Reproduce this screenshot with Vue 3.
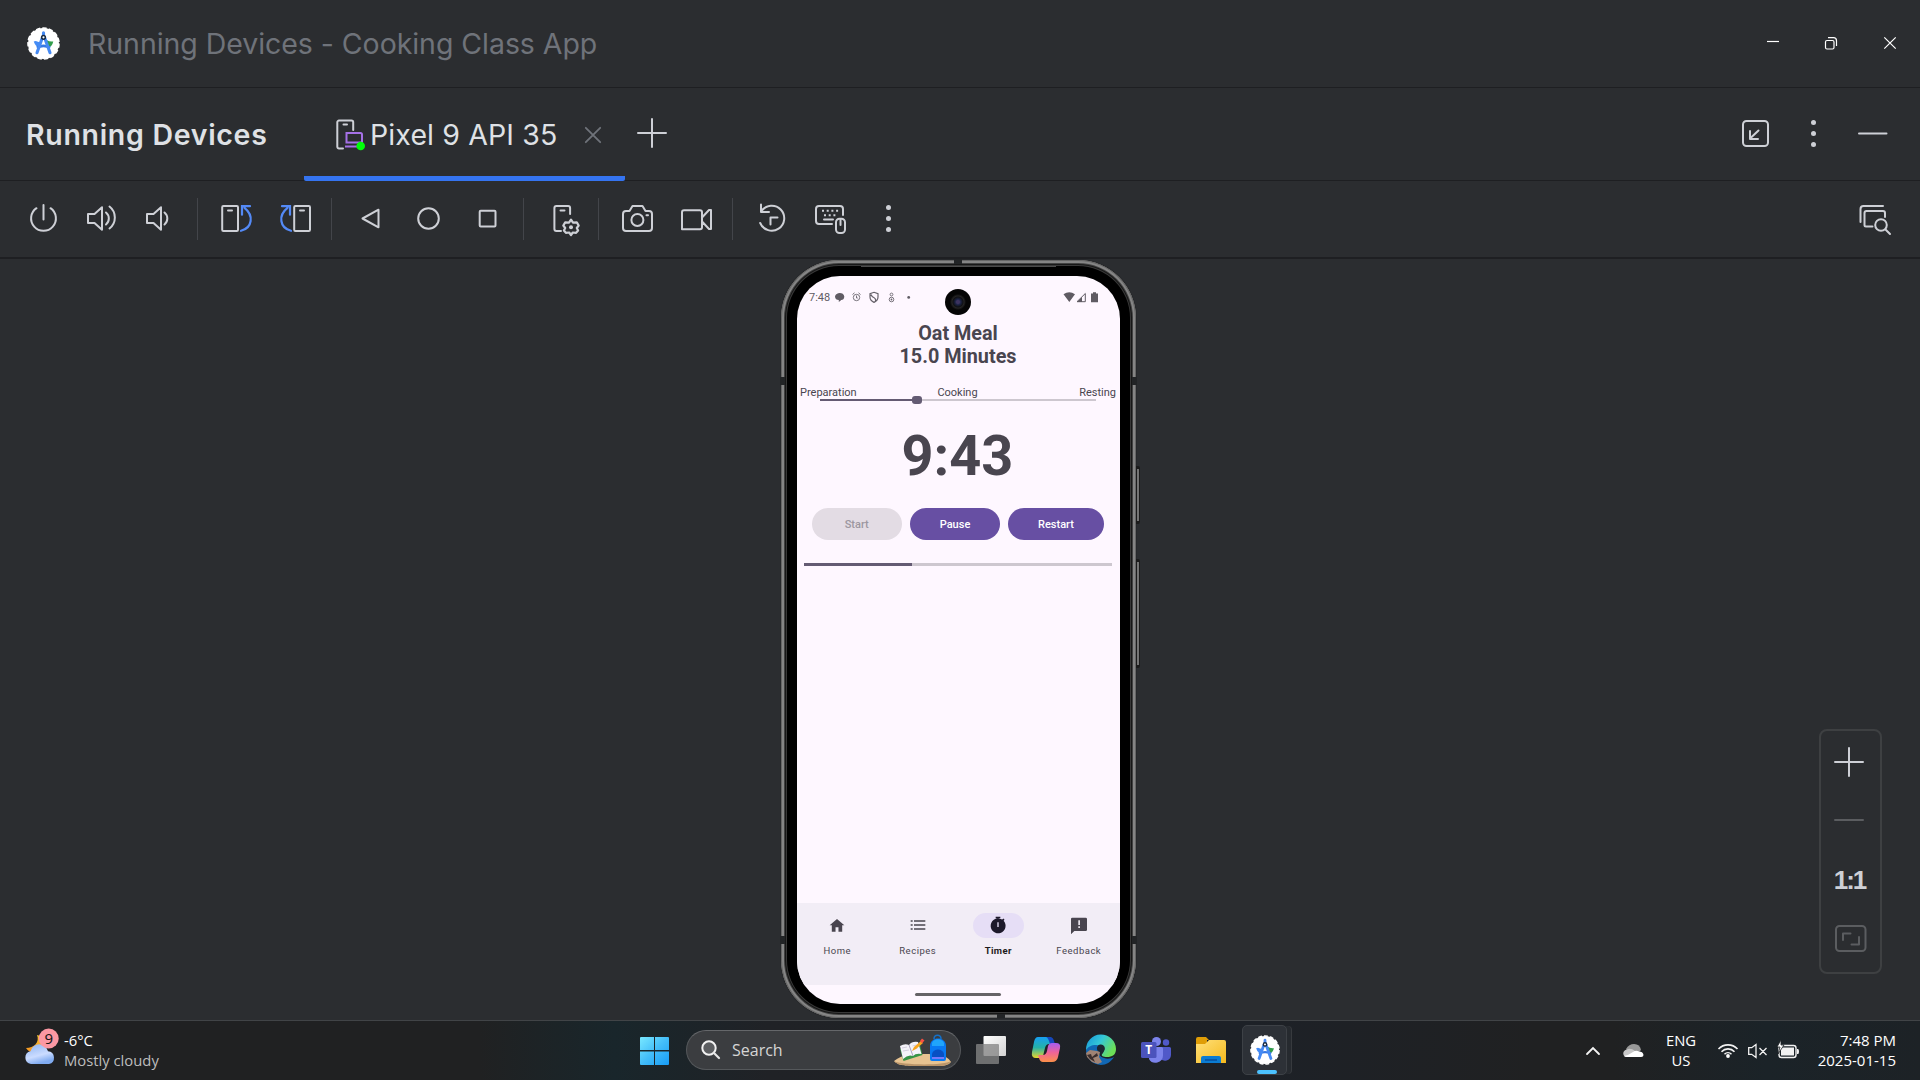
<script setup>
const steps = ['Preparation', 'Cooking', 'Resting']
const stepProgress = 35.2
const timerProgress = 35
const buttons = [
  { label: 'Start', kind: 'off' },
  { label: 'Pause', kind: 'mid' },
  { label: 'Restart', kind: 'wide' },
]
const nav = [
  { label: 'Home', icon: 'M12 3 1 12.4h3.2V22h5.6v-6.6h4.4V22h5.6v-9.6H23z' },
  { label: 'Recipes', icon: 'M1 5h3v2H1zM6 5h17v2H6zM1 11h3v2H1zM6 11h17v2H6zM1 17h3v2H1zM6 17h17v2H6z' },
  { label: 'Timer', active: true, icon: 'M8.5-.5h7v2.4h-7zM20.4 5.6l1.4-1.6-1.7-1.6-1.7 1.5A11.2 11.2 0 1 0 20.4 5.600zM11 8h2v7h-2z' },
  { label: 'Feedback', icon: 'M2 1h20a2 2 0 0 1 2 2v16a2 2 0 0 1-2 2H5l-5 5V3a2 2 0 0 1 2-2zM11 5h2.400v7H11zM11 14h2.400v2.400H11z' },
]
</script>

<template>
  <div class="desktop">
    <header class="titlebar">
      <svg class="logo" viewBox="0 0 32 32"><use href="#studio" /></svg>
      <span class="title">Running Devices - Cooking Class App</span>
      <svg class="winctl" viewBox="1767 35 130 16">
        <path d="M1767 41.500h12" />
        <rect x="1825.500" y="40.500" width="8.500" height="8.500" rx="1.500" />
        <path d="M1828 37.700h5.500a3 3 0 0 1 3 3V46M1884.300 37.300l11.400 11.400M1895.700 37.300l-11.400 11.400" />
      </svg>
    </header>

    <div class="tabs">
      <span class="heading">Running Devices</span>
      <div class="tab">
        <svg class="tabicon" viewBox="335 118 32 36">
          <path class="ln" d="M343 149.500h-4a1.700 1.700 0 0 1-1.700-1.700v-24.500a1.700 1.700 0 0 1 1.700-1.700h12.500a1.700 1.700 0 0 1 1.700 1.700V131M343.500 125.500h3.500" />
          <path d="M346.500 134h14a1.500 1.500 0 0 1 1.500 1.500v8H346.500zM345 147.500h13" fill="none" stroke="#a571e6" stroke-width="2" />
          <circle cx="360.700" cy="147" r="4.300" fill="#00ff09" />
        </svg>
        <span class="tabname">Pixel 9 API 35</span>
        <svg class="tabclose" viewBox="0 0 16 16"><path d="M.8.800l14.400 14.400M15.200.800.8 15.200" /></svg>
      </div>
      <svg class="plus" viewBox="0 0 30 30"><path class="ln" d="M15 1v28M1 15h28" /></svg>
      <svg class="tabtools" viewBox="1740 115 150 36">
        <rect class="ln" x="1743" y="121" width="25" height="25" rx="3.500" />
        <path class="ln" d="M1758.500 130.500l-8.500 8M1750 131v8h8" />
        <g class="dots"><circle cx="1813.500" cy="122.500" r="2.500" /><circle cx="1813.500" cy="133.500" r="2.500" /><circle cx="1813.500" cy="144.500" r="2.500" /></g>
        <path class="ln" d="M1859 133.500h27.500" />
      </svg>
    </div>

    <div class="toolbar">
      <div class="group">
        <svg viewBox="28 202 32 34"><path class="ln" d="M43.500 205v14.500M36.500 208.200a12.400 12.400 0 1 0 14 0" /></svg>
        <svg viewBox="86 202 32 34"><path class="ln" d="M88 214h6.500l7.500-6.800v22.600L94.500 223H88zM106 212.500a7.800 7.800 0 0 1 0 12M109.500 206.500a14 14 0 0 1 0 22" /></svg>
        <svg viewBox="144 202 32 34"><path class="ln" d="M147 214h6.500l7.500-6.800v22.600L153.500 223H147zM164.500 212.500a7.800 7.800 0 0 1 0 12" /></svg>
      </div>
      <i></i>
      <div class="group">
        <svg viewBox="221 202 32 34">
          <rect class="ln" x="222.200" y="206" width="15.800" height="25" rx="1.200" /><path class="ln" d="M228 210.500h4" />
          <path class="blue" d="M241 230.800c11.500-3 13-15.500 3.500-23M250 206.200h-8v8.500" />
        </svg>
        <svg viewBox="279 202 32 34">
          <rect class="ln" x="294.200" y="206" width="15.800" height="25" rx="1.200" /><path class="ln" d="M300 210.500h4" />
          <path class="blue" d="M291 230.800c-11.500-3-13-15.500-3.500-23M282 206.200h8v8.500" />
        </svg>
      </div>
      <i></i>
      <div class="group">
        <svg viewBox="355 202 32 34"><path class="ln" d="M378.500 209.700v17.600L362.500 218.500z" /></svg>
        <svg viewBox="413 202 32 34"><circle class="ln" cx="428.500" cy="218.500" r="10.300" /></svg>
        <svg viewBox="471 202 32 34"><rect class="ln" x="479.700" y="210.700" width="15.800" height="15.800" rx="1" /></svg>
      </div>
      <i></i>
      <div class="group">
        <svg viewBox="551 202 32 34">
          <path class="ln" d="M561 231h-4.600a2 2 0 0 1-2-2v-21a2 2 0 0 1 2-2h11.700a2 2 0 0 1 2 2v6M560.500 210.500h4" />
          <path class="ln thick" d="M571 219.700l2 3 3.800-.3 1.900 3.100-1.900 2.500 1.300 2.500-2 2.300-3.300-.3-1.800 2.500-1.800-2.500-3.300.3-2-2.300 1.300-2.500-1.900-2.500 1.900-3.100 3.800.3z" />
          <circle cx="571" cy="227.200" r="2" fill="#ced0d6" />
        </svg>
      </div>
      <i></i>
      <div class="group">
        <svg viewBox="622 202 32 34">
          <path class="ln" d="M626 211h3.500l3-5h10l3 5h3.500a3 3 0 0 1 3 3v14a3 3 0 0 1-3 3h-23a3 3 0 0 1-3-3v-14a3 3 0 0 1 3-3z" /><circle class="ln" cx="637.400" cy="220" r="6" /><path class="ln" d="M646.500 215.300h1.500" />
        </svg>
        <svg viewBox="680 202 32 34"><path class="ln" d="M684 210.300h16a2 2 0 0 1 2 2v15a2 2 0 0 1-2 2h-18v-17a2 2 0 0 1 2-2zM702.500 217l6.500-7h2v19h-2l-6.500-7" /></svg>
      </div>
      <i></i>
      <div class="group">
        <svg viewBox="756 202 32 34"><path class="ln" d="M761 204.500v7.500h8M761.500 211a12.500 12.500 0 1 1-1.300 12M770.500 224.500v-7h7" /></svg>
        <svg viewBox="814 202 32 34">
          <path class="ln" d="M832 224h-13a3 3 0 0 1-3-3v-12a3 3 0 0 1 3-3h21a3 3 0 0 1 3 3v6M824 219.500h9" />
          <path d="M822 210.800h17M824 215.200h13" fill="none" stroke="#ced0d6" stroke-width="2" stroke-dasharray="2 2.700" />
          <rect class="ln" x="836" y="218.800" width="9" height="14.200" rx="3.500" /><path class="ln" d="M840.500 219v6" />
        </svg>
        <svg class="dots" viewBox="872 202 32 34"><circle cx="888.500" cy="207.500" r="2.500" /><circle cx="888.500" cy="218.500" r="2.500" /><circle cx="888.500" cy="229.500" r="2.500" /></svg>
      </div>
      <svg class="inspect" viewBox="1860 202 34 34">
        <path class="ln" d="M1861.500 222v-13a3 3 0 0 1 3-3h19.500M1873.500 226.500h-6.500a1.500 1.500 0 0 1-1.500-1.500v-12a2 2 0 0 1 2-2h16.500a2 2 0 0 1 2 2v4M1886.500 229.500l4.500 4.500" />
        <circle class="ln" cx="1882" cy="225" r="5.800" />
      </svg>
    </div>

    <main class="stage">
      <div class="phone">
        <b class="seam s1"></b><b class="seam s2"></b><b class="seam s3"></b><b class="seam s4"></b><b class="seam s5"></b><b class="seam s6"></b>
        <b class="key k1"></b><b class="key k2"></b><b class="speaker"></b>
        <div class="screen">
          <div class="status">
            <span>7:48</span>
            <svg class="notes" viewBox="834 291 78 13">
              <g fill="none" stroke="#77737b" stroke-width="1">
                <circle cx="856.500" cy="297.500" r="3.200" /><path d="M852.500 294.500l2-1.700M860.500 294.500l-2-1.700M856.500 295.500v2.500h1.300" />
                <path d="M874 292.300l4 1.300v3.500c0 2.500-1.600 4.200-4 5.300-2.400-1.100-4-2.800-4-5.300v-3.500zM871 294.500q1 3 3.500 3.500 1.500 1 1 3" stroke="#66626a" stroke-width="1.200" />
                <circle cx="891.500" cy="299.500" r="2.300" /><circle cx="891.500" cy="294.500" r="1.400" />
              </g>
              <path d="M835 296.500c.5-4.500 8.800-5 9.300 0 0 2.300-1.500 3.600-3 3.600l-2.500 2v-2c-2 0-3.800-1.300-3.800-3.600z" fill="#605c64" />
              <circle cx="891.500" cy="299.500" r=".9" fill="#66626a" /><circle cx="908.700" cy="297.400" r="1.400" fill="#605c64" />
            </svg>
            <svg class="signal" viewBox="1063 291 36 13">
              <path d="M1063.500 294.300q5.800-4 11.500 0l-5.700 7.700zM1091 293.500h2v-1.300h3v1.300h2v8.700h-7z" fill="#5f5b63" />
              <path d="M1085.300 293.500v8.200h-8.300z" fill="none" stroke="#5f5b63" /><path d="M1082 297v5h-5z" fill="#5f5b63" />
            </svg>
            <b class="lens"></b>
          </div>
          <h1>Oat Meal<br />15.0 Minutes</h1>
          <div class="steps"><span v-for="s in steps" :key="s">{{ s }}</span></div>
          <div class="slider"><div class="done" :style="{ width: stepProgress + '%' }"></div></div>
          <div class="clock">9:43</div>
          <div class="actions"><button v-for="b in buttons" :key="b.label" :class="b.kind">{{ b.label }}</button></div>
          <div class="progress"><div class="done" :style="{ width: timerProgress + '%' }"></div></div>
          <nav class="nav">
            <div v-for="n in nav" :key="n.label" class="item" :class="{ active: n.active }">
              <div class="pill"><svg viewBox="0 0 24 24"><path :d="n.icon" fill="currentColor" fill-rule="evenodd" /></svg></div>
              <span>{{ n.label }}</span>
            </div>
          </nav>
          <div class="gesture"></div>
        </div>
      </div>

      <div class="zoom">
        <svg viewBox="0 0 30 30"><path class="ln" d="M15 1v28M1 15h28" /></svg>
        <svg class="dim" viewBox="0 0 30 30"><path class="ln" d="M1 15h28" /></svg>
        <span>1:1</span>
        <svg class="dim fit" viewBox="0 0 32 27"><rect class="ln" x="1" y="1" width="29.500" height="25" rx="3.500" /><path class="ln" d="M8 15V8.500h7.500M24 12v7.500h-7.500" /></svg>
      </div>
    </main>

    <footer class="taskbar">
      <svg class="weather" viewBox="24 1024 36 42">
        <path d="M37 1034c3 7-3 13-11 13 3 5 9 6 14 3l4-14z" fill="url(#moon)" />
        <path d="M31 1063a6.500 6.500 0 0 1-.5-12.800 9 9 0 0 1 17.500 0 6.500 6.500 0 0 1 1 12.800z" fill="url(#cloud)" />
        <circle cx="48.700" cy="1037.500" r="10" fill="#fb98a3" />
        <text x="48.700" y="1043" text-anchor="middle" font-size="15" fill="#171717">9</text>
      </svg>
      <div class="forecast"><span>-6°C</span><em>Mostly cloudy</em></div>

      <svg class="start" viewBox="0 0 29 29"><path d="M0 2a1 1 0 0 1 1-1h13v13H0zM15 1h13a1 1 0 0 1 1 1v12H15zM0 15.500h14V29H1a1 1 0 0 1-1-1zM15 15.500h14V28a1 1 0 0 1-1 1H15z" fill="url(#win)" /></svg>
      <div class="search">
        <svg class="lensicon" viewBox="0 0 20 20"><circle cx="8" cy="8" r="6.700" fill="#5c5e61" stroke="#f2f2f2" stroke-width="2" /><path d="M13 13l5 5" stroke="#e5e5e5" stroke-width="2.200" stroke-linecap="round" /></svg>
        <span>Search</span>
        <svg class="promo" viewBox="895 1034 60 34">
          <path d="M896 1062c9-7 17-7 29-7 15 0 23 0 28 8-4 5-12 4-28 4-18 0-24 0-29-5z" fill="#e7c391" /><path d="M896 1062c6 4 50 5 57 0-3 6-12 5-28 5-18 0-24 0-29-5z" fill="#bb9569" />
          <path d="M902 1050l20-4 2.500 10-19 6z" fill="#369447" /><path d="M902 1047q5-3 9-1 3-4 9-3l3.500 12q-6-1-8.500 2-5-2-10 3z" fill="#f4f3f9" />
          <path d="M911 1046l4 11" stroke="#a9a2bb" fill="none" /><path d="M904 1049l5-1M905 1052l6-1M914.500 1047l4-1M915.500 1050l4-1" stroke="#c4bfd2" stroke-width=".7" fill="none" />
          <path d="M914 1052l2-4 7-6 2 2-7 6z" fill="#f8a51e" /><path d="M922 1042l2-2.500 2.500 2-2.500 2.700z" fill="#fa5142" />
          <path d="M936 1040c0-5 7-5 7 0" fill="none" stroke="#1670c5" stroke-width="1.500" /><path d="M932 1047c0-10 16-10 16 0v13q0 2-2 2h-12q-2 0-2-2z" fill="#0979f2" /><path d="M934 1044c2-5 10-5 12 0v3h-12z" fill="#20a5fb" /><path d="M934 1055c1-6 11-6 12 0v5h-12z" fill="#0850c4" /><path d="M934 1058h12v2h-12z" fill="#7779fa" />
        </svg>
      </div>
      <svg class="app" viewBox="975 1034 32 32"><rect x="983.500" y="1036" width="22.500" height="20" rx="1" fill="url(#white)" /><rect x="976" y="1044" width="23" height="20" rx="1" fill="#858585" fill-opacity=".78" /></svg>
      <svg class="app" viewBox="1030 1034 32 32">
        <path d="M1038 1037h11q3 0 4 4l1 3h-5q-3 0-4 4l-2 8q-1 2-4 2h-3q-5 0-4-6l2-10q1-5 4-5z" fill="url(#copA)" />
        <path d="M1046 1037h4q3 0 4 4l1 3h-5q-2-7-4-7z" fill="#1647bd" />
        <path d="M1052 1062h-9q-3 0-4-4l-1-3h5q3 0 4-4l1-5q1-3 4-3h4q5 0 4 5l-2 9q-1 5-6 5z" fill="url(#copB)" />
      </svg>
      <svg class="app" viewBox="1085 1034 32 32">
        <path d="M1086 1050c2-7 12-8 16-3 3 3-1 7-3 5-1 5 8 9 15 5-3 5-8 8-13 8a15 15 0 0 1-15-15z" fill="#1167b4" />
        <path d="M1086 1050a15 15 0 0 1 30-1c0 6-4 8-9 8-4 0-6-1-5-3 4-3 1-9-6-9-5 0-8 2-10 5z" fill="url(#edgeA)" />
        <path d="M1099 1052a4 4 0 1 1 5-1l-2 3q-2 2-3-2z" fill="#1c2632" />
        <path d="M1086 1053l4-3 7 1 3 1-1 5 3 5-4 2-6-2-5-5z" fill="#a08374" /><path d="M1087 1055l4-1 1 3 5-4 1 3-5 2 2 4-5-3z" fill="#392d2d" />
      </svg>
      <svg class="app" viewBox="1140 1034 32 32">
        <circle cx="1156.500" cy="1041.500" r="4.500" fill="#7b83eb" /><circle cx="1166" cy="1042.500" r="3.200" fill="#5059c9" />
        <path d="M1160 1047h9.500q1.500 0 1.500 1.500v6.500a6 6 0 0 1-11 3z" fill="#5059c9" /><path d="M1150 1047h11.500q1.500 0 1.500 1.500v7a7.500 7.500 0 0 1-14 3.500z" fill="#7b83eb" />
        <rect x="1141" y="1042" width="15.500" height="16" rx="1.500" fill="#4b53bc" /><text x="1148.700" y="1054.300" text-anchor="middle" font-size="12" font-weight="700" fill="#fff">T</text>
      </svg>
      <svg class="app" viewBox="1195 1034 32 32">
        <path d="M1196 1039q0-2 2-2h8l3 3h-2v6h-11z" fill="#df9d07" /><path d="M1196 1044h9l4-4h15q2 0 2 2v21h-30z" fill="url(#folder)" />
        <path d="M1201 1063v-5q0-2 2-2h16q2 0 2 2v5z" fill="#0b7cd2" /><path d="M1205 1060h12" stroke="#074e9d" stroke-width="1.500" />
      </svg>
      <div class="running"><svg viewBox="0 0 32 32"><use href="#studio" /></svg></div>

      <svg class="tray" viewBox="1584 1038 62 22">
        <path d="M1587 1053l6-6 6 6" fill="none" stroke="#f4f4f4" stroke-width="1.800" stroke-linecap="round" />
        <path d="M1626 1048q3-5 8-5 6 0 7 6l-3 3-10-1z" fill="#989898" /><path d="M1627 1056c-5 0-5-7 0-7.500 3-1.500 5-.5 8 1.500l8 5z" fill="#c8c8c8" /><path d="M1624 1055q5-1 9-4 3-2 6-.5c5 0 6 5.500 2 5.500h-14q-2 0-3-1z" fill="#fff" />
      </svg>
      <div class="lang"><span>ENG</span><span>US</span></div>
      <svg class="tray2" viewBox="1717 1038 82 22">
        <g fill="none" stroke="#f2f2f2" stroke-width="1.600"><path d="M1718.500 1048a13 13 0 0 1 19 0M1721.500 1050.700a9 9 0 0 1 13 0M1724.500 1053.200a5 5 0 0 1 7 0" />
          <path d="M1748.700 1046.700h3l4.300-3.200v13l-4.300-3.200h-3zM1759.500 1047l7 7M1766.500 1047l-7 7" stroke-width="1.300" />
          <rect x="1779" y="1044.500" width="17" height="12" rx="2.500" stroke-width="1.400" /></g>
        <circle cx="1728" cy="1055" r="1.900" fill="#fff" /><path d="M1781 1046.500h13v8h-13zM1797 1048h1q1 0 1 2.500t-1 2.500h-1z" fill="#f2f2f2" />
        <path d="M1781 1039l-4 7h3l-2 7 6-9h-3z" fill="#fff" stroke="#1d2125" stroke-width=".8" />
      </svg>
      <div class="time"><span>7:48 PM</span><span>2025-01-15</span></div>
    </footer>

    <svg class="defs" width="0" height="0">
      <defs>
        <symbol id="studio" viewBox="0 0 32 32">
          <circle cx="16" cy="16" r="15" fill="#fff" /><circle cx="16" cy="16" r="15" fill="none" stroke="#fff" stroke-width="1.600" stroke-dasharray="4.200 2.080" />
          <path d="M19 12.500q3 2 6.500 1.500-1 5-5.500 6z" fill="#329d4c" /><path d="M6.500 14q2 5.500 5.500 5.500l2-4-5.500-2z" fill="#438bf5" /><path d="M9.500 20q6.500-3.500 13 0" fill="none" stroke="#3578e5" stroke-width="2.600" />
          <path d="M16 5.500v3M14.700 11 9.700 25M17.300 11l5 14" fill="none" stroke="#468af3" stroke-width="3" stroke-linecap="round" /><circle cx="16" cy="10" r="1.800" fill="#fff" stroke="#172b45" stroke-width="1.500" />
        </symbol>
        <linearGradient id="win" x2="1" y2="1"><stop stop-color="#79e8ff" /><stop offset=".5" stop-color="#43bdf9" /><stop offset="1" stop-color="#179cf5" /></linearGradient>
        <linearGradient id="moon" x2="0" y2="1"><stop stop-color="#f9c632" /><stop offset="1" stop-color="#f49121" /></linearGradient>
        <linearGradient id="cloud" x2=".4" y2="1"><stop stop-color="#8cb3f1" /><stop offset=".65" stop-color="#cbdcff" /><stop offset="1" stop-color="#80abf0" /></linearGradient>
        <linearGradient id="white" x2="1" y2="1"><stop stop-color="#fff" /><stop offset="1" stop-color="#d2d2d2" /></linearGradient>
        <linearGradient id="copA" x2="0" y2="1"><stop stop-color="#179ff2" /><stop offset=".5" stop-color="#25b2a8" /><stop offset="1" stop-color="#e9d52b" /></linearGradient>
        <linearGradient id="copB" x2="0" y2="1"><stop stop-color="#a75cf0" /><stop offset=".5" stop-color="#ef6398" /><stop offset="1" stop-color="#fb9049" /></linearGradient>
        <linearGradient id="edgeA" x2="1" y2=".5"><stop stop-color="#1594d9" /><stop offset=".5" stop-color="#34c7d8" /><stop offset="1" stop-color="#6cdf57" /></linearGradient>
        <linearGradient id="folder" x2="1" y2="1"><stop stop-color="#ffe07a" /><stop offset="1" stop-color="#f5b91c" /></linearGradient>
      </defs>
    </svg>
  </div>
</template>

<style>
html, body { margin: 0; background: #2b2d30; overflow: hidden; }
</style>

<style scoped>
* { box-sizing: border-box; }
.desktop { width: 1920px; height: 1080px; display: flex; flex-direction: column; background: #2b2d30; font-family: Inter, sans-serif; color: #dfe1e5; white-space: nowrap; }
svg { display: block; flex: none; overflow: visible; }
.defs { position: absolute; }
.ln { fill: none; stroke: #ced0d6; stroke-width: 2; stroke-linecap: round; stroke-linejoin: round; }
.thick { stroke-width: 2.2; }
.blue { fill: none; stroke: #548af7; stroke-width: 2.2; stroke-linecap: round; }
.dots { fill: #ced0d6; }

.titlebar { height: 88px; display: flex; align-items: center; border-bottom: 1px solid #1e1f22; padding: 0 23px 0 27px; }
.logo { width: 33px; height: 33px; }
.title { margin-left: 28px; font-size: 28.5px; color: #6f737a; letter-spacing: -.05px; }
.winctl { width: 130px; height: 16px; margin: 0 0 2px auto; fill: none; stroke: #fff; stroke-width: 1.2; }

.tabs { height: 93px; display: flex; align-items: center; border-bottom: 1px solid #1e1f22; padding-left: 26px; }
.heading { width: 278px; font-size: 28.5px; font-weight: 600; letter-spacing: .7px; }
.tab { width: 321px; height: 93px; display: flex; align-items: center; padding-left: 31px; border-bottom: 5px solid #3574f0; border-radius: 2px; padding-top: 5px; position: relative; z-index: 1; }
.tabicon { width: 32px; height: 36px; margin-top: 2px; }
.tabname { width: 215px; margin-left: 3px; font-size: 28.5px; letter-spacing: .12px; }
.tabclose { width: 16px; height: 16px; margin-top: 2px; fill: none; stroke: #6f737a; stroke-width: 1.8; stroke-linecap: round; }
.plus { width: 30px; height: 30px; margin: 0 0 3px 12px; }
.tabtools { width: 150px; height: 36px; margin: 0 30px 2px auto; }

.toolbar { height: 78px; display: flex; align-items: center; border-bottom: 2px solid #1e1f22; padding: 0 27px 0 28px; }
.group { display: flex; gap: 26px; }
.group svg { width: 32px; height: 34px; }
.toolbar i { width: 1px; height: 42px; background: #43454a; margin: 0 23px 0 20px; }
.toolbar i:nth-of-type(1) { margin-left: 21px; }
.toolbar i:nth-of-type(3) { margin-right: 27px; }
.toolbar i:nth-of-type(4) { margin-left: 15px; }
.inspect { width: 34px; height: 34px; margin-left: auto; }

.stage { height: 761px; display: flex; justify-content: center; padding: 1px 3px 0 0; position: relative; }
.phone { position: relative; width: 355px; height: 758px; padding: 16px; border-radius: 58px; background: #000; box-shadow: inset 0 0 0 1px #666, inset 0 0 0 3px #858585, inset 0 0 0 4px #414141, inset 0 0 0 5px #171717, inset 0 0 0 6px #383838, 0 0 1px #000; }
.seam, .key, .speaker, .lens { position: absolute; }
.seam { background: #222426; width: 5px; height: 8px; }
.s1 { left: 173px; top: -1px; width: 8px; height: 5px; }
.s2 { left: -1px; top: 117px; }
.s3 { right: -1px; top: 117px; }
.s4 { left: -1px; top: 676px; }
.s5 { right: -1px; top: 676px; }
.s6 { left: 216px; bottom: 0; width: 8px; height: 4px; }
.key { left: 355px; width: 4px; background: #757575; border: solid #1b1b1b; border-width: 3px 1px 3px 1px; border-radius: 0 2px 2px 0; }
.k1 { top: 206px; height: 58px; }
.k2 { top: 299px; height: 109px; }
.speaker { left: 80px; top: 6px; width: 195px; height: 1px; background: #4c4c4c; }
.screen { width: 323px; height: 728px; border-radius: 43px; overflow: hidden; background: #fef7ff; color: #49454f; font-family: Roboto, sans-serif; display: flex; flex-direction: column; }
.status { position: relative; height: 36px; display: flex; align-items: flex-start; padding: 14px 0 0 12px; font-size: 11px; line-height: 15px; color: #5f5b63; }
.status span { width: 25px; }
.notes { width: 78px; height: 13px; margin-top: 1px; }
.signal { width: 36px; height: 13px; margin: 1px 21px 0 auto; }
.lens { left: 147.500px; top: 13px; width: 26px; height: 26px; border-radius: 50%; background: radial-gradient(circle, #3c3360 0 1.500px, #182040 3px, #101012 5px, #242424 6px, #050505 8px); }
h1 { margin: 10px 1px 0 0; font-size: 19.800px; line-height: 23px; font-weight: 700; text-align: center; height: 46px; }
.steps { display: grid; grid-template-columns: 1fr auto 1fr; margin: 18px 5px 0 3px; height: 13px; font-size: 11px; line-height: 13px; }
.steps span:last-child { text-align: right; margin-right: -1px; }
.slider { position: relative; margin: 0 24px 0 23px; height: 2px; background: #cdc7cf; }
.done { height: 100%; background: #645b73; position: relative; }
.slider .done::after { content: ''; position: absolute; right: -5px; top: -3px; width: 10px; height: 8px; border-radius: 3px; background: #645b73; }
.clock { height: 66px; margin: 22px 2px 0 0; text-align: center; font-size: 55.800px; line-height: 66px; font-weight: 700; }
.actions { display: flex; margin: 19px 16px 0 14.500px; justify-content: space-between; }
button { height: 32px; width: 90.500px; border: 0; border-radius: 16px; background: #674fa3; color: #fff; font: 500 11px Roboto, sans-serif; padding: 0; }
button.off { background: #e3dce4; color: #9c97a0; }
button.wide { width: 96px; }
.progress { height: 3px; margin: 23px 8px 0 7px; background: #cdc7cf; }
.nav { height: 82px; margin-top: auto; display: flex; background: #f2edf6; padding-right: 1px; }
.item { flex: 1; display: flex; flex-direction: column; align-items: center; padding-top: 10px; font-size: 9.500px; letter-spacing: .5px; font-weight: 400; }
.item span { margin-top: 5.500px; line-height: 14px; }
.pill { width: 51px; height: 25px; border-radius: 13px; display: grid; place-items: center; padding-bottom: 2px; }
.pill svg { width: 16px; height: 16px; overflow: visible; }
.active .pill { background: #e6def6; color: #1d192b; }
.active span { color: #1d1b20; font-weight: 700; letter-spacing: .4px; }
.gesture { width: 86px; height: 3px; margin: 8px 0 8px 118px; border-radius: 2px; background: #666367; }

.zoom { position: absolute; left: 1819px; top: 470px; width: 63px; height: 245px; border: 2px solid #3e4042; border-radius: 8px; display: flex; flex-direction: column; align-items: center; padding-top: 16px; }
.zoom svg { width: 30px; height: 30px; margin-right: 3px; }
.zoom .dim { margin-top: 28px; }
.zoom .dim .ln { stroke: #5b5d60; }
.zoom span { margin: 28px 2px 0 0; height: 34px; font: 700 26px/34px "Liberation Sans", sans-serif; color: #ced0d6; letter-spacing: -2px; }
.zoom .fit { width: 32px; height: 27px; margin: 28px 0 0; }

.taskbar { height: 60px; display: flex; align-items: center; padding-bottom: 1px; border-top: 1px solid #414447; background: linear-gradient(90deg, #202122 0, #202122 25%, #19262b 32%, #202226 40%, #1d2127 65%, #202122 80%, #202122 84%, #1b2328 92%, #1d2226 100%); font-family: "Noto Sans", "Open Sans", sans-serif; font-size: 15px; line-height: 20px; color: #fff; position: relative; }
.weather { width: 36px; height: 42px; margin: -9px 0 0 24px; }
.forecast { width: 576px; margin: -1px 0 0 4px; display: flex; flex-direction: column; font-family: "Open Sans", sans-serif; font-size: 14.800px; }
.forecast em { font-style: normal; color: #bdbdbd; }
.start { width: 29px; height: 29px; }
.search { width: 275px; height: 40px; margin: 0 14px 0 17px; display: flex; align-items: center; padding: 0 7px 0 14px; border-radius: 20px; border: 1px solid #55585b; border-top-color: #65676a; background: #3b3d40; }
.search .lensicon { width: 20px; height: 20px; }
.search span { margin-left: 11px; font-size: 16px; color: #d5d5d5; font-family: "Open Sans", sans-serif; }
.promo { width: 60px; height: 34px; margin-left: auto; }
.app { width: 32px; height: 32px; margin-right: 23px; }
.running { width: 45px; height: 50px; margin-left: -8px; display: grid; place-items: center; border-radius: 5px; border: 1px solid #3d4146; background: #2d3137; box-shadow: 5px 0 0 -1px #262a2f, 6px 0 0 -1px #373a3e; position: relative; }
.running svg { width: 30px; height: 30px; margin-left: 1px; }
.running::after { content: ''; position: absolute; left: 14px; bottom: 0; width: 20px; height: 4px; border-radius: 2px; background: #4cc2ff; }
.tray { width: 62px; height: 22px; margin-left: auto; }
.lang { width: 71px; margin-top: -1px; padding-right: 1px; display: flex; flex-direction: column; align-items: center; font-family: "Open Sans", sans-serif; font-size: 14.800px; }
.tray2 { width: 82px; height: 22px; }
.time { width: 97px; margin: -1px 24px 0 0; display: flex; flex-direction: column; align-items: flex-end; font-family: "Open Sans", sans-serif; font-size: 15px; }
</style>
